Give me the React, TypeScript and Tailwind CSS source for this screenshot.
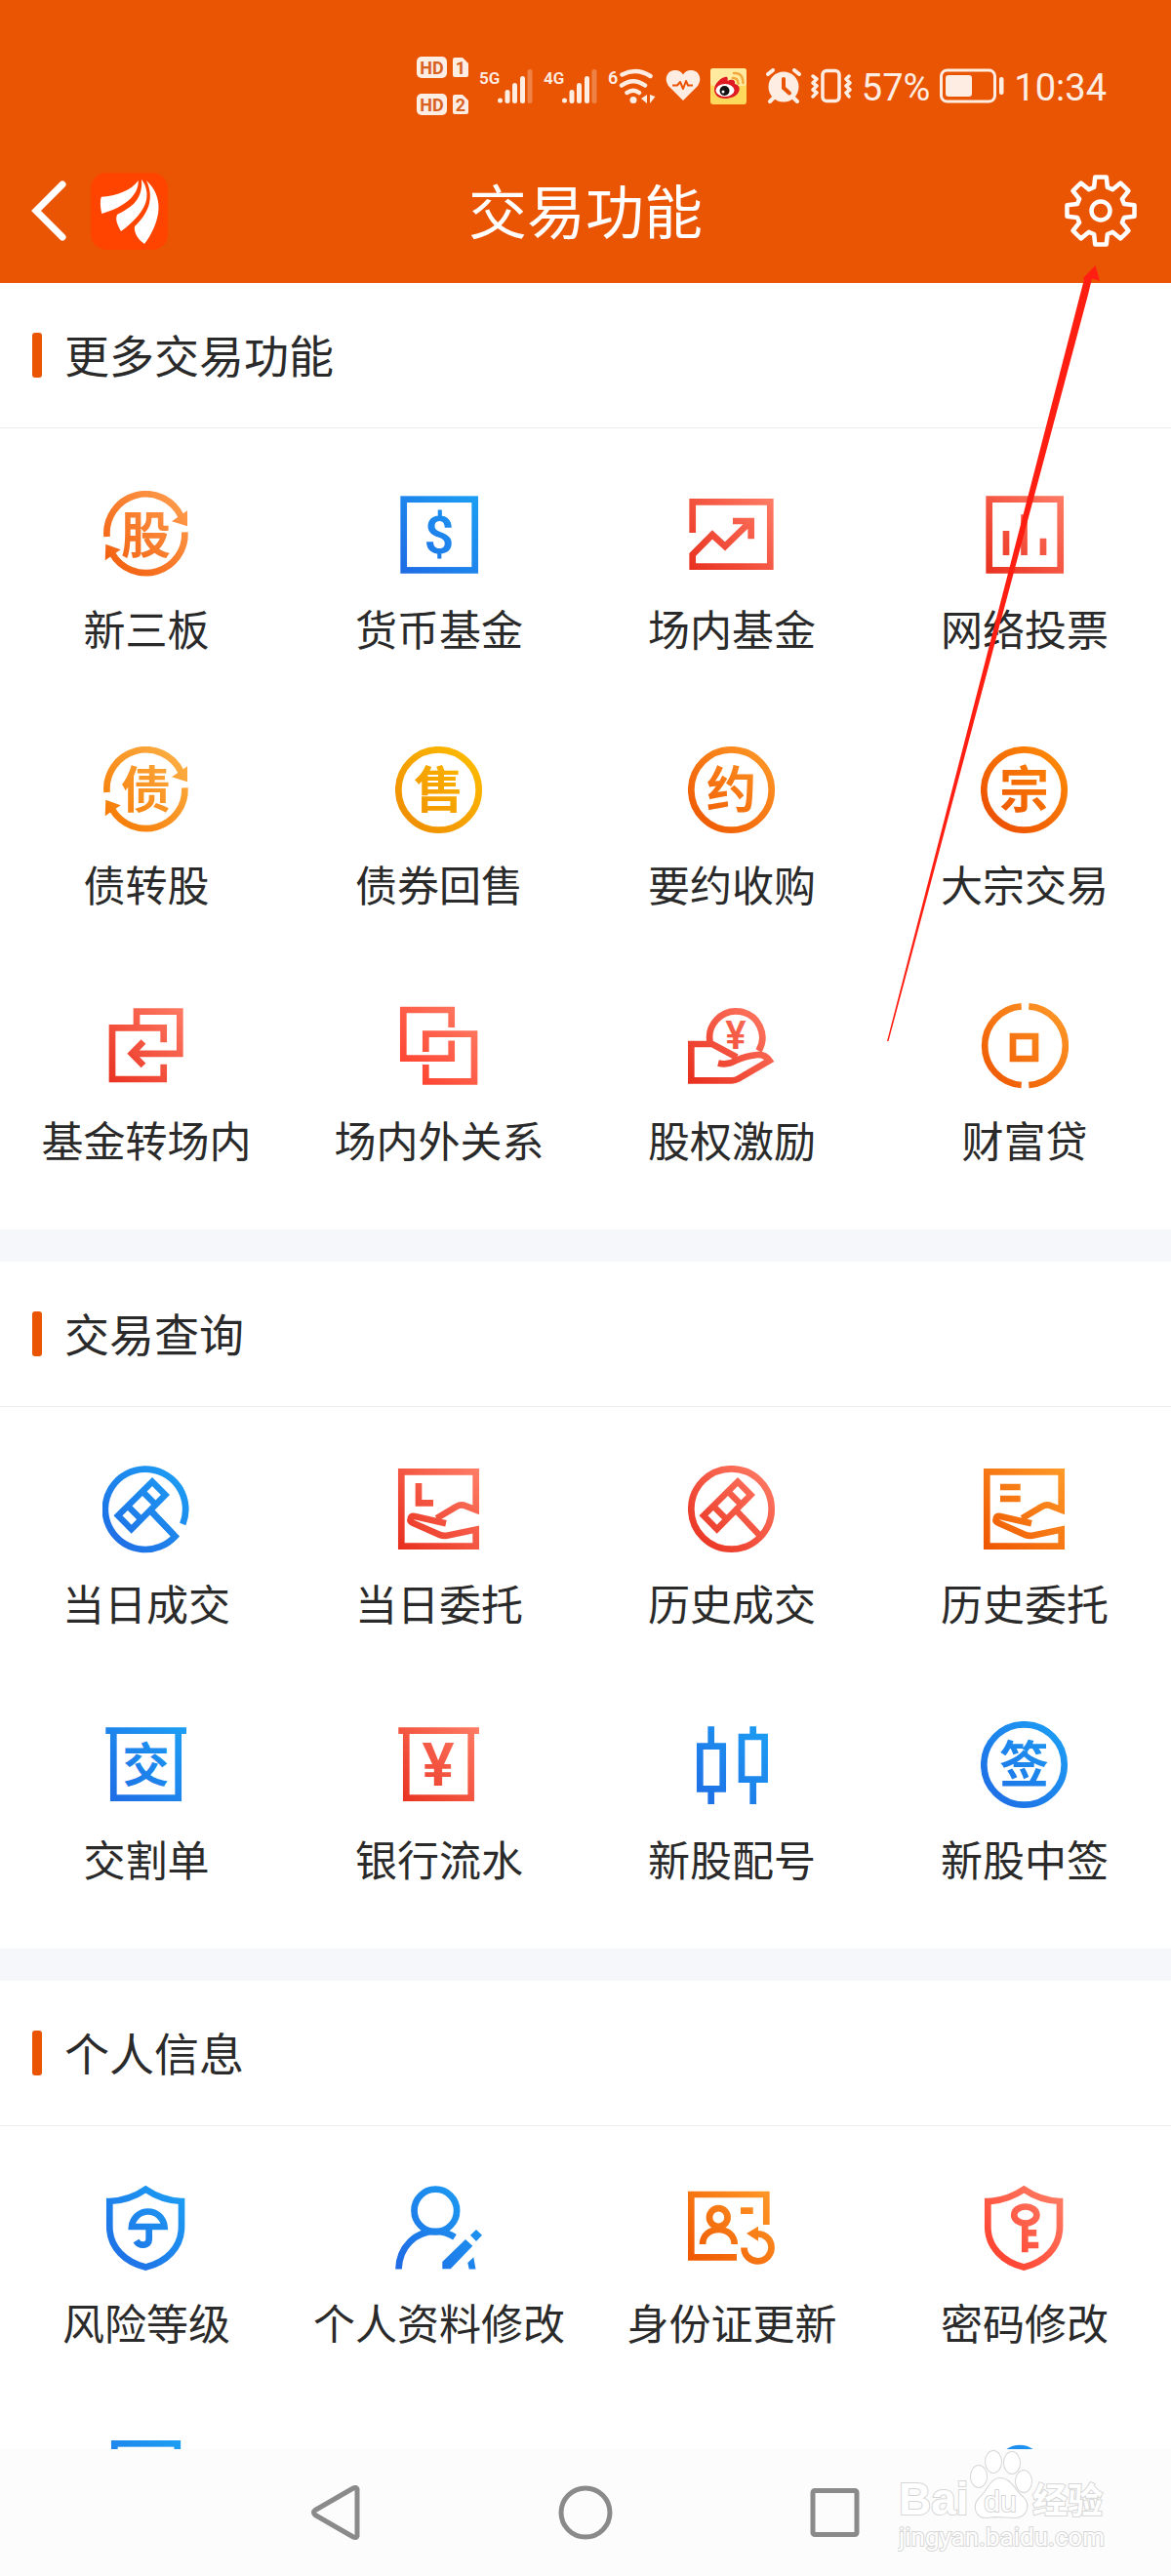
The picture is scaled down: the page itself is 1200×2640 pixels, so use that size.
import React from "react";

type Tone = "coral" | "amber" | "gold" | "tangerine" | "orange" | "blue" | "red" | "scarlet";

interface Tile {
  label: string;
  tone: Tone;
  icon: React.ReactNode;
}

interface SectionData {
  title: string;
  tiles: Tile[];
}

// from = bottom left, to = top right
const tones: { name: Tone; from: string; to: string }[] = [
  { name: "coral", from: "#f15a0a", to: "#ffa050" },
  { name: "amber", from: "#f67600", to: "#fcb248" },
  { name: "gold", from: "#ee8a00", to: "#febe00" },
  { name: "tangerine", from: "#ee5500", to: "#ff9a28" },
  { name: "orange", from: "#ea4a00", to: "#ff8e08" },
  { name: "blue", from: "#1f6ae4", to: "#1ca0f4" },
  { name: "red", from: "#e82f1e", to: "#ff7d66" },
  { name: "scarlet", from: "#ff3a28", to: "#ff8068" },
];

const fills: Record<Tone, string> = {
  coral: "url(#tone-coral)",
  amber: "url(#tone-amber)",
  gold: "url(#tone-gold)",
  tangerine: "url(#tone-tangerine)",
  orange: "url(#tone-orange)",
  blue: "url(#tone-blue)",
  red: "url(#tone-red)",
  scarlet: "url(#tone-scarlet)",
};

const ToneDefs: React.FC = () => (
  <svg className="absolute size-0" aria-hidden="true">
    <defs>
      {tones.map((tone) => (
        <linearGradient key={tone.name} id={`tone-${tone.name}`} gradientUnits="userSpaceOnUse" x1="4" y1="86" x2="86" y2="4">
          <stop offset="0" stopColor={tone.from} />
          <stop offset="1" stopColor={tone.to} />
        </linearGradient>
      ))}
    </defs>
  </svg>
);

/* ---------- icon parts, all on a 90 x 90 board ---------- */

const Glyph: React.FC<{ tone: Tone; char: string; y?: number; size?: number }> = ({ tone, char, y = 63, size = 51 }) => (
  <text x="44.5" y={y} textAnchor="middle" fontSize={size} fontWeight="700" fill={fills[tone]} stroke="none">
    {char}
  </text>
);

const Currency: React.FC<{ tone: Tone; char: string; x?: number; y: number; size: number }> = ({ tone, char, x = 45, y, size }) => (
  <text x={x} y={y} textAnchor="middle" fontSize={size} fontWeight="600" fontFamily="Roboto, sans-serif" fill={fills[tone]} stroke="none">
    {char}
  </text>
);

const Ring = <circle cx="44.5" cy="44.5" r="41.2" />;

const Cycle: React.FC<{ tone: Tone }> = ({ tone }) => (
  <>
    <path d="M4.6 47A40 40 0 0 1 80.5 26" />
    <path d="M84.4 42.3A40 40 0 0 1 10 64.5" />
    <path d="M71 31.3 87 20.3V36.3ZM3.3 54.7 18.7 60.3 2.7 71.3Z" fill={fills[tone]} stroke="none" />
  </>
);

const Gavel = (
  <>
    <path d="M51 16.5 64.4 30 29.7 65.2 16 51.3Z" strokeWidth="6.5" />
    <path d="M41 26.5 55 40.5M26 41.5 40 55.5M49 45.5 73 71" strokeWidth="6.5" />
  </>
);

const Palm = (
  <path d="M42.5 54 62 42.3Q67 39.5 71 40.8L82.7 45.3V6.3H6.3V82.7H82.7V65.5L53 71.7Q49 72.3 45.5 70.8L17.5 58.5Q15 57.3 15.6 55 16.2 51.4 20 52L52 59.2" />
);

const Shield = (
  <path d="M44.3 4.8Q27 16.5 7.3 17V43C7.3 65 24 79.5 44.3 84.6 64.7 79.5 81 65 81 43V17Q61.7 16.5 44.3 4.8Z" />
);

const Person = (
  <>
    <circle cx="41.3" cy="26.5" r="21.8" />
    <path d="M3.5 86.5C4 63.5 21 47.8 41 47.8 48 47.8 55 49.8 61 53.8" />
  </>
);

const sections: SectionData[] = [
  {
    title: "更多交易功能",
    tiles: [
      { label: "新三板", tone: "coral", icon: <><Cycle tone="coral" /><Glyph tone="coral" char="股" y={64} /></> },
      { label: "货币基金", tone: "blue", icon: <><rect x="8.7" y="8.7" width="73" height="72.7" /><Currency tone="blue" char="$" y={64} size={54} /></> },
      {
        label: "场内基金",
        tone: "red",
        icon: (
          <path d="M4.7 43V11.3H84.3V77.7H4.7V65.5L25 45 38 57 64.5 31M46 31H68M64.7 28V49.3" />
        ),
      },
      { label: "网络投票", tone: "red", icon: <path d="M8.7 8.7H81.7V81.4H8.7ZM26 41V66M44.5 24.3V66M64 48.7V66" /> },
      { label: "债转股", tone: "amber", icon: <><Cycle tone="amber" /><Glyph tone="amber" char="债" /></> },
      { label: "债券回售", tone: "gold", icon: <>{Ring}<Glyph tone="gold" char="售" /></> },
      { label: "要约收购", tone: "tangerine", icon: <>{Ring}<Glyph tone="tangerine" char="约" /></> },
      { label: "大宗交易", tone: "orange", icon: <>{Ring}<Glyph tone="orange" char="宗" /></> },
      {
        label: "基金转场内",
        tone: "red",
        icon: (
          <>
            <path d="M62.7 41.3V26.3H10V79H62.7V63.7" />
            <path d="M35 26V9.7H79.3V52.8H31" />
            <path d="M42 40.5 30 52.8 42 65" />
          </>
        ),
      },
      {
        label: "场内外关系",
        tone: "scarlet",
        icon: <path d="M57.7 26V8H8.3V57.7H57.7V39.5M31.3 51V32.7H81V81.3H31.3V64" />,
      },
      {
        label: "股权激励",
        tone: "red",
        icon: (
          <>
            <path d="M22.9 42.5A27 27 0 1 1 72.5 50" />
            <path d="M50 56.5 25 43H3.3V80.3H45Q48.5 80.3 51.5 78.6L83.5 60Q79 53.5 71 54 58 55.5 50 59.5 41 65 31 62.5" />
            <Currency tone="red" char="¥" x={49} y={48} size={40} />
          </>
        ),
      },
      {
        label: "财富贷",
        tone: "tangerine",
        icon: <path d="M41.7 4.4A40.4 40.4 0 0 0 41.7 85M49.3 4.4A40.4 40.4 0 0 1 49.3 85M33 35H56V58H33Z" />,
      },
    ],
  },
  {
    title: "交易查询",
    tiles: [
      { label: "当日成交", tone: "blue", icon: <><path d="M48 45 74.5 72.5A41.2 41.2 0 1 1 82.3 60" />{Gavel}</> },
      { label: "当日委托", tone: "red", icon: <>{Palm}<path d="M24 18V38.3H39" /></> },
      { label: "历史成交", tone: "red", icon: <>{Ring}{Gavel}</> },
      { label: "历史委托", tone: "tangerine", icon: <>{Palm}<path d="M20 22H40.7M20 34H40.7" /></> },
      { label: "交割单", tone: "blue", icon: <><path d="M3.3 9.7H86M11.3 10V78.7H77.7V10" /><Glyph tone="blue" char="交" y={62} size={48} /></> },
      { label: "银行流水", tone: "red", icon: <><path d="M3.3 9.7H86M11.3 10V78.7H77.7V10" /><Currency tone="red" char="¥" x={44} y={66} size={62} /></> },
      {
        label: "新股配号",
        tone: "blue",
        icon: <path d="M23.7 5.3V25M23.7 70V85M66.7 5.3V15M66.7 60V85M12.3 25.7H35.7V69.3H12.3ZM55 16H78.6V59.7H55Z" />,
      },
      { label: "新股中签", tone: "blue", icon: <>{Ring}<Glyph tone="blue" char="签" /></> },
    ],
  },
  {
    title: "个人信息",
    tiles: [
      { label: "风险等级", tone: "blue", icon: <>{Shield}<path d="M30 43A16.8 16.8 0 0 1 63.5 43ZM47.7 43V56C47.7 63 38 63.5 34.5 57.5" /></> },
      {
        label: "个人资料修改",
        tone: "blue",
        icon: (
          <>
            {Person}
            <path
              d="M72 56 79.3 62.7 56.7 86.3H48.3V79ZM83 46 89 51.7 83 58 77 51.7ZM80.3 74.3 82.5 86.5H75.7L74.3 80Z"
              fill={fills.blue}
              stroke="none"
            />
          </>
        ),
      },
      {
        label: "身份证更新",
        tone: "tangerine",
        icon: (
          <>
            <path d="M80.3 41V10H3.3V74.3H50M54 26.7H66.7" />
            <circle cx="31.3" cy="33.5" r="9.3" />
            <path d="M15 61C15 41 47.7 41 47.7 61" />
            <path d="M57.5 64.5A14 14 0 1 0 70 50.5" />
            <path d="M60 50 72 42.7V57.7Z" fill={fills.tangerine} stroke="none" />
          </>
        ),
      },
      {
        label: "密码修改",
        tone: "scarlet",
        icon: (
          <>
            {Shield}
            <ellipse cx="45.8" cy="31" rx="11.6" ry="8.5" />
            <path d="M45.3 40V69.3M46 49.3H57.2M46 62H59.3" />
          </>
        ),
      },
      { label: "", tone: "blue", icon: <rect x="12.3" y="3.3" width="64.5" height="80" /> },
      { label: "", tone: "blue", icon: null },
      { label: "", tone: "blue", icon: null },
      { label: "", tone: "blue", icon: <circle cx="40" cy="28" r="20" /> },
    ],
  },
];

/* ---------- status bar ---------- */

const Signal: React.FC<{ network: string }> = ({ network }) => (
  <svg viewBox="0 0 56 38" className="h-[38px] w-14" fill="currentColor">
    <text x="0" y="17" fontSize="17" fontWeight="600" fontFamily="Roboto, sans-serif">
      {network}
    </text>
    <circle cx="21.5" cy="34" r="2.5" />
    <rect x="26.5" y="23" width="5" height="14" rx="2.5" />
    <rect x="34" y="16" width="5" height="21" rx="2.5" />
    <rect x="42" y="9" width="5" height="28" rx="2.5" />
    <rect x="49.5" y="2" width="5" height="35" rx="2.5" opacity="0.3" />
  </svg>
);

const SimCards: React.FC = () => (
  <svg viewBox="0 0 54 62" className="h-[62px] w-[54px]" fontFamily="Roboto, sans-serif" fontWeight="700">
    {["1", "2"].map((sim, index) => (
      <g key={sim} transform={`translate(0 ${index * 38})`}>
        <rect x="0" y="1" width="31" height="22" rx="5" fill="currentColor" />
        <text x="15.5" y="18.5" textAnchor="middle" fontSize="18" fill="#d9611f">HD</text>
        <path d="M39 2H47L53 8V20Q53 22 51 22H39Q37 22 37 20V4Q37 2 39 2Z" fill="currentColor" />
        <text x="45" y="18.5" textAnchor="middle" fontSize="18" fill="#d9611f">{sim}</text>
      </g>
    ))}
  </svg>
);

const Wifi: React.FC = () => (
  <svg viewBox="0 0 49 38" className="h-[38px] w-[49px]" fill="none" stroke="currentColor" strokeWidth="4.5" strokeLinecap="round">
    <text x="0" y="17" fontSize="18" fontWeight="600" fontFamily="Roboto, sans-serif" fill="currentColor" stroke="none">6</text>
    <path d="M14.5 7.5Q29 0 43.5 9M14 18.5Q26 10 38 18.5M19.5 26Q26 21.5 32 26" />
    <circle cx="26" cy="33.5" r="3.5" fill="currentColor" stroke="none" />
    <path d="M40 28V37L34 32ZM43 28 48.5 30 43 37Z" fill="currentColor" stroke="none" />
  </svg>
);

const StatusBar: React.FC = () => (
  <div className="flex h-[176px] items-center justify-end gap-[10px] pr-[66px] text-[#fdede3]">
    <SimCards />
    <Signal network="5G" />
    <Signal network="4G" />
    <Wifi />
    <svg viewBox="0 0 36 34" className="h-[34px] w-9" fill="currentColor">
      <path d="M18 32 3 17C-3 8 4 0 10 1 14 1 16.5 3 18 5.5 19.5 3 22 1 26 1 32 0 39 8 33 17Z" />
      <path d="M7 16.5H12L15 13 18 20 21 12 23 16.5H28" fill="none" stroke="#ea5504" strokeWidth="2" strokeLinejoin="round" />
    </svg>
    <svg viewBox="0 0 37 37" className="mr-[10px] size-[37px]">
      <rect width="37" height="37" rx="3" fill="#ffd95c" />
      <rect width="37" height="18" rx="3" fill="#ffeaa0" />
      <path d="M4 22C4 16 10 10 15 9 18 8 18 11 17.5 13 21 11 26 11 25 16 29 17 31 20 29 24 27 29 20 31 15 31 8 31 4 27 4 22Z" fill="#e01a22" />
      <ellipse cx="15" cy="22.5" rx="9.5" ry="6.5" fill="#fff" />
      <circle cx="14.5" cy="23" r="5" fill="#111" />
      <circle cx="13" cy="24" r="1.5" fill="#fff" />
      <path d="M23 10Q28 9.5 28.5 15.5M24 5Q33 4 33.5 15" fill="none" stroke="#f3a83c" strokeWidth="2.5" strokeLinecap="round" />
    </svg>
    <svg viewBox="0 0 36 36" className="size-9" fill="currentColor" stroke="currentColor" strokeLinecap="round">
      <circle cx="18" cy="19" r="15.5" stroke="none" />
      <path d="M2 6 7 2M34 6 29 2M4 34 9 29M32 34 27 29" strokeWidth="4" />
      <path d="M18 11V20L24 25.5" fill="none" stroke="#ea5504" strokeWidth="4" />
    </svg>
    <svg viewBox="0 0 42 36" className="h-9 w-[42px]" fill="none" stroke="currentColor" strokeWidth="3.5" strokeLinecap="round" strokeLinejoin="round">
      <rect x="12" y="2.5" width="17" height="31" rx="4" />
      <path d="M2 8 6 11 2 15 6 18 2 22 6 25 2 29M39 8 36 11 40 15 36 18 40 22 36 25 39 29" />
    </svg>
    <span className="pt-1 text-[38px] leading-[48px]">57%</span>
    <svg viewBox="0 0 66 36" className="h-9 w-[66px]">
      <rect x="1.5" y="2" width="55" height="32" rx="6" fill="none" stroke="currentColor" strokeWidth="3" />
      <rect x="6" y="7" width="27" height="22" rx="3" fill="currentColor" />
      <rect x="61" y="9" width="4.5" height="18" rx="2" fill="currentColor" />
    </svg>
    <time className="pt-1 text-[38px] leading-[48px]">10:34</time>
  </div>
);

/* ---------- app bar ---------- */

const gearPoints = Array.from({ length: 8 })
  .flatMap((_, tooth) =>
    [
      [-16, 25],
      [-9.5, 35],
      [9.5, 35],
      [16, 25],
    ].map(([angle, radius]) => {
      const rad = ((tooth * 45 + angle) * Math.PI) / 180;
      return `${(40 + radius * Math.sin(rad)).toFixed(2)},${(40 - radius * Math.cos(rad)).toFixed(2)}`;
    })
  )
  .join(" ");

const AppBar: React.FC = () => (
  <div className="grid h-[114px] grid-cols-[1fr_auto_1fr] items-center px-8 pb-9">
    <div className="flex items-center gap-6">
      <button type="button" aria-label="返回">
        <svg viewBox="0 0 37 62" className="h-[62px] w-[37px]" fill="none" stroke="#fff" strokeWidth="7" strokeLinecap="round">
          <path d="M32 4 5 31 32 58" />
        </svg>
      </button>
      <svg viewBox="0 0 79 79" className="size-[79px]">
        <rect width="79" height="79" rx="16" fill="#ff4400" />
        <g fill="#fff">
          <path d="M11 24.7C26 24 42 18 48.7 8 49.5 22 36 35 11.3 42 9.5 34 9.5 27 11 24.7Z" />
          <path d="M52 7C57 13 58.5 21 57 28 55 38 44 51 31 60 27 53 25 48 27 43 38 37 54 30 52 7Z" />
          <path d="M57 8C66 16 70 27 69.5 37 69 50 62 64 55 73 48 68 44 61 45 55 58 43 66 27 57 8Z" />
        </g>
      </svg>
    </div>
    <h1 className="pt-2 text-[60px] leading-[72px] text-white">交易功能</h1>
    <button type="button" aria-label="设置" className="justify-self-end">
      <svg viewBox="0 0 80 80" className="size-20" fill="none" stroke="#fff" strokeWidth="4.5" strokeLinejoin="round">
        <polygon points={gearPoints} />
        <circle cx="40" cy="40" r="9.5" />
      </svg>
    </button>
  </div>
);

/* ---------- sections ---------- */

const Section: React.FC<{ section: SectionData; first: boolean }> = ({ section, first }) => (
  <section className="bg-white">
    <div className="flex h-[149px] items-center gap-[23px] border-b border-[#ececec] px-[33px]">
      <span className="h-[46px] w-[10px] rounded-[3px] bg-[#ea5504]" />
      <h2 className="pt-1 text-[46px] leading-[56px]">{section.title}</h2>
    </div>
    <div className={`grid grid-cols-4 gap-y-[94px] pb-[65px] ${first ? "pt-16" : "pt-15"}`}>
      {section.tiles.map((tile, index) =>
        tile.icon ? (
          <button key={index} type="button" className="flex flex-col items-center gap-[30px]">
            <svg viewBox="0 0 90 90" className="size-[90px]" fill="none" stroke={fills[tile.tone]} strokeWidth="6.7" aria-hidden="true">
              {tile.icon}
            </svg>
            <span className="h-12 text-[43px] leading-[48px] whitespace-nowrap">{tile.label}</span>
          </button>
        ) : (
          <div key={index} />
        )
      )}
    </div>
  </section>
);

const Watermark: React.FC = () => (
  <svg
    viewBox="0 0 224 110"
    className="absolute right-[56px] bottom-5 h-[110px] w-[224px]"
    fill="#fff"
    stroke="#d6d6d6"
    strokeWidth="2"
    paintOrder="stroke"
    fontFamily="'Liberation Sans', 'Noto Sans CJK SC', sans-serif"
  >
    <text x="1" y="67" fontSize="46" fontWeight="700">Bai</text>
    <ellipse cx="83" cy="28" rx="8" ry="11" />
    <ellipse cx="98" cy="13" rx="8" ry="11" />
    <ellipse cx="117" cy="14" rx="8" ry="11" />
    <ellipse cx="129" cy="33" rx="8" ry="11" />
    <path d="M105 30C116 30 120 43 128 49 137 58 131 70 120 70 110 70 102 68 92 70 80 71 76 58 84 50 93 42 95 30 105 30Z" />
    <text x="105" y="64" fontSize="30" textAnchor="middle">du</text>
    <text x="138" y="66" fontSize="36" fontWeight="700">经验</text>
    <text x="1" y="99" fontSize="26" fontFamily="Roboto, sans-serif">jingyan.baidu.com</text>
  </svg>
);

const NavBar: React.FC = () => (
  <nav className="relative flex h-[130px] shrink-0 items-center justify-center gap-[196px] bg-[#fcfcfc]">
    <button type="button" aria-label="后退">
      <svg viewBox="0 0 60 60" className="size-[60px]" fill="none" stroke="#8a8a8a" strokeWidth="5" strokeLinejoin="round">
        <path d="M52 6V54Q51 56.5 48 55L9 32.5Q6 30 9 27.5L48 5Q51 3.5 52 6Z" />
      </svg>
    </button>
    <button type="button" aria-label="主页">
      <svg viewBox="0 0 60 60" className="size-[60px]" fill="none" stroke="#8a8a8a" strokeWidth="5">
        <circle cx="30" cy="30" r="25" />
      </svg>
    </button>
    <button type="button" aria-label="最近任务">
      <svg viewBox="0 0 60 60" className="size-[60px]" fill="none" stroke="#8a8a8a" strokeWidth="5">
        <rect x="7" y="7.5" width="45" height="45" rx="2" />
      </svg>
    </button>
    <Watermark />
  </nav>
);

const App: React.FC = () => {
  return (
    <div className="relative flex h-screen flex-col overflow-hidden bg-white font-['Roboto','Noto_Sans_CJK_SC',sans-serif] text-[#2a2a2a]">
      <ToneDefs />
      <header className="shrink-0 bg-[#ea5504]">
        <StatusBar />
        <AppBar />
      </header>

      <main className="flex min-h-0 flex-1 flex-col gap-[33px] overflow-hidden bg-[#f5f7fa]">
        {sections.map((section, index) => (
          <Section key={section.title} section={section} first={index === 0} />
        ))}
      </main>

      <NavBar />

      {/* Pointer to the settings button */}
      <svg viewBox="0 0 220 800" className="pointer-events-none absolute top-[270px] right-[71px] h-[800px] w-[220px]" fill="#ff1f12">
        <path d="M0 797 202 16 201 15 213.5 2 218 18 210 15.5 206 32 1.5 797Z" />
      </svg>
    </div>
  );
};

export default App;
